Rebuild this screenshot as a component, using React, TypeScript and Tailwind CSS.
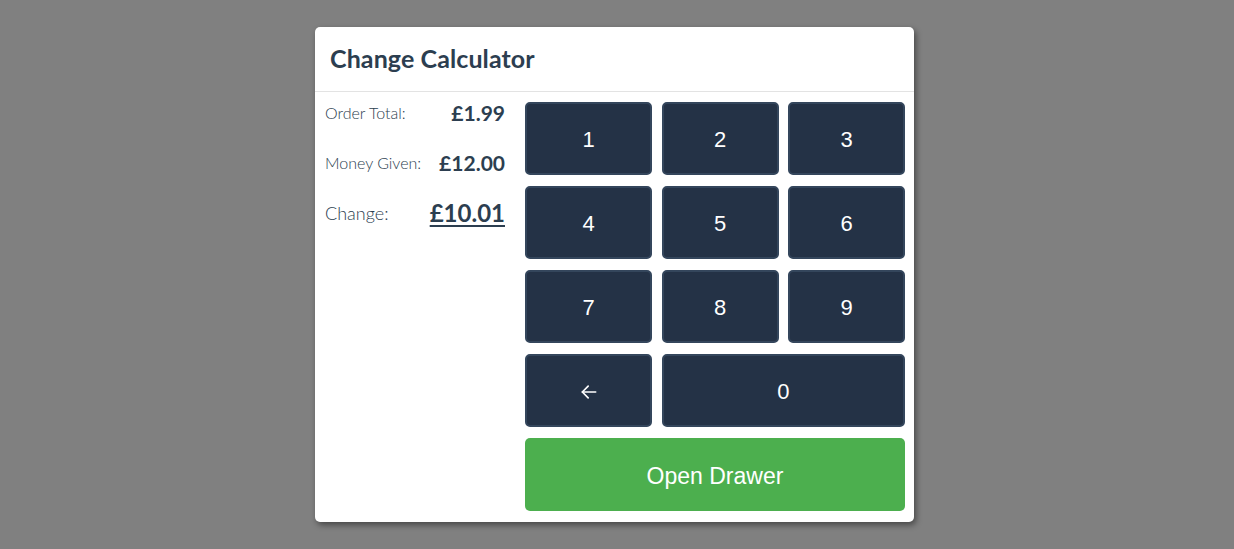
import React, { useState } from 'react';

const keyClass =
  'h-[73px] rounded-[5px] border-2 border-[#34465c] bg-[#243246] text-white text-[22px] flex items-center justify-center pt-[2px]';

const Row = ({ label, value, big }: { label: string; value: string; big?: boolean }) => (
  <div className="flex items-center justify-between h-[50px]">
    <span className={big ? 'text-[18px] font-light' : 'text-[16px] font-light'}>{label}</span>
    <span className={big ? 'text-[24px] font-bold underline underline-offset-[3px] decoration-2' : 'text-[21px] font-bold'}>
      {value}
    </span>
  </div>
);

export default function App() {
  const [given, setGiven] = useState('1200');
  const press = (k: string) => setGiven((g) => (k === 'back' ? g.slice(0, -1) : g + k));
  void given;

  return (
    <div className="w-[1234px] h-[549px] bg-[#808080] flex justify-center pt-[27px] pr-[5px]" style={{ fontFamily: 'Lato, "Open Sans", sans-serif' }}>
      <div className="w-[599px] h-[495px] bg-white rounded-[5px] shadow-[2px_3px_6px_rgba(0,0,0,0.45)] flex flex-col text-[#2c3e50]">
        <header className="h-[65px] shrink-0 border-b border-[#e3e3e3] flex items-center px-[15px]">
          <h2 className="text-[25px] font-bold tracking-[0.1px]">Change Calculator</h2>
        </header>
        <div className="flex flex-1 pt-[10px] pb-[10px]">
          <div className="w-[200px] pl-[10px] pr-[10px] flex flex-col -mt-[14px]">
            <Row label="Order Total:" value="£1.99" />
            <Row label="Money Given:" value="£12.00" />
            <Row label="Change:" value="£10.01" big />
          </div>
          <div className="w-[380px] ml-[10px] flex flex-col gap-[11px]">
            <div
              className="grid grid-cols-[127px_117px_117px] gap-x-[9.5px] gap-y-[11px]"
              style={{ fontFamily: '"Liberation Sans", Arial, sans-serif' }}
            >
              {['1', '2', '3', '4', '5', '6', '7', '8', '9'].map((n) => (
                <button key={n} className={keyClass} onClick={() => press(n)}>
                  {n}
                </button>
              ))}
              <button className={keyClass} onClick={() => press('back')}>
                <svg width="20" height="20" viewBox="0 0 24 24" fill="none" stroke="white" strokeWidth="2" strokeLinecap="round" strokeLinejoin="round">
                  <path d="M20 12H4" />
                  <path d="M11 5l-7 7 7 7" />
                </svg>
              </button>
              <button className={`${keyClass} col-span-2`} onClick={() => press('0')}>
                0
              </button>
            </div>
            <button
              className="h-[73px] rounded-[5px] bg-[#4caf4e] text-white text-[23px] pt-[4px]"
              style={{ fontFamily: '"Liberation Sans", Arial, sans-serif' }}
            >
              Open Drawer
            </button>
          </div>
        </div>
      </div>
    </div>
  );
}
